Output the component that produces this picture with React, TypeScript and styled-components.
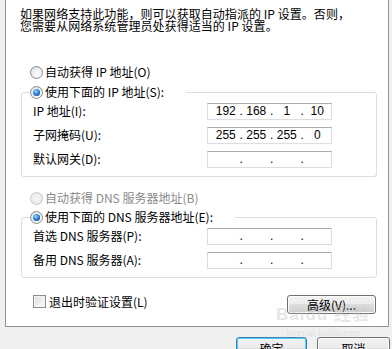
import React from "react";
import styled, { createGlobalStyle, css } from "styled-components";

const Global = createGlobalStyle`
  *, *::before, *::after { box-sizing: border-box; }
  html, body { margin: 0; padding: 0; background: #f0f0f0; }
  body {
    font-family: "Noto Sans CJK SC", "Liberation Sans", sans-serif;
    font-size: 12px;
    color: #000;
    width: 392px;
    height: 349px;
    overflow: hidden;
  }
`;

const Page = styled.div`
  position: relative;
  width: 392px;
  height: 349px;
`;

const Panel = styled.div`
  margin-left: 5px;
  width: 384px;
  height: 327px;
  background: #fff;
  border: 1px solid #8e9196;
  border-top: none;
  padding: 8px 0 0 14px;
  display: flex;
  flex-direction: column;
`;

const Intro = styled.p`
  margin: 0;
  font-size: 12px;
  line-height: 12px;
  letter-spacing: 0.05px;
`;

const OptionRow = styled.label<{ $top: number; $disabled?: boolean }>`
  display: flex;
  align-items: center;
  gap: 2px;
  height: 14px;
  margin: ${(p) => p.$top}px 0 0 10px;
  line-height: 14px;
  color: ${(p) => (p.$disabled ? "#8a8a8a" : "#000")};
`;

const Radio = styled.span<{ $checked?: boolean; $disabled?: boolean }>`
  position: relative;
  width: 13px;
  height: 13px;
  flex: none;
  border-radius: 50%;
  border: 1px solid ${(p) => (p.$disabled ? "#c4c4c4" : "#8b8e91")};
  background: ${(p) =>
    p.$disabled
      ? "radial-gradient(circle at 50% 50%, #f4f4f4 0%, #ececec 70%)"
      : "radial-gradient(circle at 60% 65%, #ffffff 0%, #f0f0f0 45%, #d6d6d6 90%)"};
  ${(p) =>
    p.$checked &&
    css`
      &::after {
        content: "";
        position: absolute;
        left: 2px;
        top: 2px;
        width: 7px;
        height: 7px;
        border-radius: 50%;
        background: radial-gradient(circle at 40% 35%, #9fdcff 0%, #3c8ee0 40%, #16519e 75%, #0e3f80 100%);
        box-shadow: 0 0 0 1px #e6f2fb;
      }
    `}
`;

const Group = styled.fieldset<{ $top: number }>`
  margin: ${(p) => p.$top}px 0 0 1px;
  width: 356px;
  min-inline-size: 0;
  border: 1px solid #d5dfe5;
  border-radius: 3px;
  padding: 0 0 5px 8px;
`;

const Legend = styled.legend`
  display: flex;
  align-items: center;
  gap: 2px;
  height: 14px;
  line-height: 14px;
  padding: 0 22px 0 0;
  margin: 0;
  background: #fff;
`;

const Row = styled.div`
  display: grid;
  grid-template-columns: 174px 125px;
  align-items: center;
  height: 24px;
  padding-left: 3px;
`;

const Label = styled.span`
  line-height: 14px;
  white-space: nowrap;
`;

const IpBox = styled.div`
  display: grid;
  grid-template-columns: 1fr 3px 1fr 3px 1fr 3px 1fr;
  align-items: center;
  height: 17px;
  width: 125px;
  padding-left: 4px;
  border: 1px solid #dadde2;
  border-top-color: #abadb3;
  background: #fff;
  font-family: "Liberation Sans", Arial, sans-serif;
  font-size: 12px;
  line-height: 15px;
`;

const Field = styled.span`
  text-align: center;
`;

const Dot = styled.span`
  text-align: center;
  font-size: 12px;
`;

const BottomRow = styled.div`
  display: flex;
  justify-content: space-between;
  align-items: flex-start;
  width: 343px;
  margin: 17px 0 0 13px;
`;

const CheckLabel = styled.label`
  display: flex;
  align-items: center;
  gap: 3px;
  height: 13px;
  line-height: 13px;
`;

const Checkbox = styled.span`
  width: 13px;
  height: 13px;
  flex: none;
  border: 1px solid #8b8e91;
  background: linear-gradient(135deg, #dcdcdc 0%, #f1f1f1 60%, #fbfbfb 100%);
  box-shadow: inset 0 0 0 1px #f4f4f4;
`;

const Button = styled.button<{ $width: number; $height: number; $default?: boolean }>`
  width: ${(p) => p.$width}px;
  height: ${(p) => p.$height}px;
  padding: 0;
  border: 1px solid ${(p) => (p.$default ? "#3c7fb1" : "#707070")};
  border-radius: 3px;
  background: linear-gradient(#f2f2f2 0%, #ebebeb 49%, #dddddd 50%, #cfcfcf 100%);
  box-shadow: inset 0 0 0 1px ${(p) => (p.$default ? "#48d0f8" : "#fcfcfc")};
  font-family: "Noto Sans CJK SC", "Liberation Sans", sans-serif;
  font-size: 12px;
  line-height: 14px;
  color: #000;
`;

const Footer = styled.div`
  display: flex;
  justify-content: flex-end;
  gap: 10px;
  margin-top: 10px;
  padding-right: 2px;
`;

const Watermark = styled.div`
  position: absolute;
  left: 276px;
  top: 306px;
  display: flex;
  flex-direction: column;
  align-items: center;
  pointer-events: none;
  color: rgba(200, 200, 200, 0.45);
`;

const WmBig = styled.span`
  font-family: "Liberation Sans", "Noto Sans CJK SC", sans-serif;
  font-weight: bold;
  font-size: 17px;
  line-height: 18px;
  letter-spacing: 1px;
`;

const WmSmall = styled.span`
  font-family: "Liberation Serif", serif;
  font-size: 10px;
  line-height: 12px;
  margin-top: 3px;
`;

function IpField({ parts }: { parts?: string[] }) {
  const p = parts ?? ["", "", "", ""];
  return (
    <IpBox>
      <Field>{p[0]}</Field>
      <Dot>.</Dot>
      <Field>{p[1]}</Field>
      <Dot>.</Dot>
      <Field>{p[2]}</Field>
      <Dot>.</Dot>
      <Field>{p[3]}</Field>
    </IpBox>
  );
}

export default function App() {
  return (
    <Page>
      <Global />
      <Panel>
        <Intro>
          如果网络支持此功能，则可以获取自动指派的 IP 设置。否则，
          <br />
          您需要从网络系统管理员处获得适当的 IP 设置。
        </Intro>

        <OptionRow $top={33}>
          <Radio />
          <span>自动获得 IP 地址(O)</span>
        </OptionRow>

        <Group $top={6}>
          <Legend>
            <Radio $checked />
            <span>使用下面的 IP 地址(S):</span>
          </Legend>
          <Row>
            <Label>IP 地址(I):</Label>
            <IpField parts={["192", "168", "1", "10"]} />
          </Row>
          <Row>
            <Label>子网掩码(U):</Label>
            <IpField parts={["255", "255", "255", "0"]} />
          </Row>
          <Row>
            <Label>默认网关(D):</Label>
            <IpField />
          </Row>
        </Group>

        <OptionRow $top={14} $disabled>
          <Radio $disabled />
          <span>自动获得 DNS 服务器地址(B)</span>
        </OptionRow>

        <Group $top={5}>
          <Legend>
            <Radio $checked />
            <span>使用下面的 DNS 服务器地址(E):</span>
          </Legend>
          <Row>
            <Label>首选 DNS 服务器(P):</Label>
            <IpField />
          </Row>
          <Row>
            <Label>备用 DNS 服务器(A):</Label>
            <IpField />
          </Row>
        </Group>

        <BottomRow>
          <CheckLabel>
            <Checkbox />
            <span>退出时验证设置(L)</span>
          </CheckLabel>
          <Button $width={89} $height={19}>
            高级(V)...
          </Button>
        </BottomRow>
      </Panel>

      <Footer>
        <Button $width={71} $height={23} $default>
          确定
        </Button>
        <Button $width={73} $height={23}>
          取消
        </Button>
      </Footer>

      <Watermark>
        <WmBig>Baidu 经验</WmBig>
        <WmSmall>jingyan.baidu.com</WmSmall>
      </Watermark>
    </Page>
  );
}
